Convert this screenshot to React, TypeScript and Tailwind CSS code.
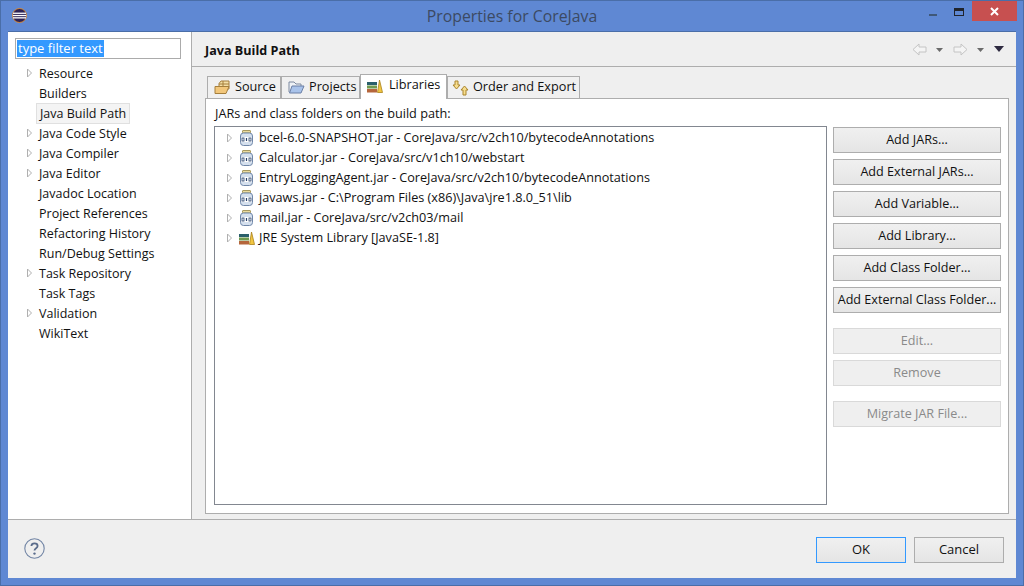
import React from "react";

const font = { fontFamily: '"Open Sans", "Noto Sans", sans-serif' };

function Arrow() {
  return (
    <svg width="7" height="10" viewBox="0 0 7 10" className="shrink-0">
      <path d="M1.5 1 L5.5 5 L1.5 9 Z" fill="#fff" stroke="#b0b0b0" />
    </svg>
  );
}

function EclipseLogo() {
  return (
    <svg width="15" height="15" viewBox="0 0 15 15">
      <circle cx="7.5" cy="7.5" r="7" fill="#2c2255" stroke="#f7941e" strokeWidth="0.8" />
      <rect x="1" y="4.6" width="13" height="1.3" fill="#fff" />
      <rect x="0.7" y="6.9" width="13.6" height="1.3" fill="#fff" />
      <rect x="1" y="9.2" width="13" height="1.3" fill="#fff" />
    </svg>
  );
}

function Jar() {
  return (
    <svg width="13" height="16" viewBox="0 0 13 16" className="shrink-0">
      <rect x="2.5" y="0.5" width="8" height="2.5" rx="0.5" fill="#ecdca0" stroke="#a89a60" />
      <rect x="0.5" y="3" width="12" height="12.5" rx="3" fill="#d5e0ee" stroke="#6f86a8" />
      <rect x="1" y="7" width="11" height="5" fill="#fff" />
      <rect x="2" y="8" width="2" height="3" fill="none" stroke="#27406b" strokeWidth="0.8" />
      <path d="M6.5 8v3" stroke="#27406b" strokeWidth="1.2" />
      <rect x="9" y="8" width="2" height="3" fill="none" stroke="#27406b" strokeWidth="0.8" />
    </svg>
  );
}

function Library() {
  return (
    <svg width="16" height="14" viewBox="0 0 16 14" className="shrink-0">
      <rect x="0" y="3" width="10" height="3" fill="#2a5f6b" />
      <rect x="0" y="6.5" width="10" height="3" fill="#6f9a4f" />
      <rect x="0" y="10" width="10" height="3.5" fill="#b5663c" />
      <path d="M10.5 13.5 L12.5 1 L15.5 13.5 Z" fill="#f2c641" stroke="#a9821c" strokeWidth="0.8" />
    </svg>
  );
}

function PackageFolder() {
  return (
    <svg width="17" height="15" viewBox="0 0 17 15" className="shrink-0">
      <path d="M5 3.5 L7 1 H15 V9 H5 Z" fill="#f3dfa6" stroke="#a57f3c" />
      <path d="M9 1v5M5 4h10" stroke="#a57f3c" />
      <path d="M1 6.5 H12 L15 6.5 L12 13.5 H1 Z" fill="#f2c77b" stroke="#a57f3c" />
    </svg>
  );
}

function BlueFolder() {
  return (
    <svg width="17" height="15" viewBox="0 0 17 15" className="shrink-0">
      <path d="M1 12 V2 H6 L8 4 H13 V6" fill="#eef1f5" stroke="#7d8aa0" />
      <path d="M1.5 13 L4 6 H16 L13 13 Z" fill="#a9c3ea" stroke="#6a7fa5" />
    </svg>
  );
}

function OrderIcon() {
  return (
    <svg width="17" height="16" viewBox="0 0 17 16" className="shrink-0">
      <path d="M3 1 H6 V5 H8 L4.5 9 L1 5 H3 Z" fill="#f6dd8e" stroke="#a9842c" />
      <path d="M11 15 H14 V10 H16 L12.5 6 L9 10 H11 Z" fill="#f6dd8e" stroke="#a9842c" />
    </svg>
  );
}

function NavArrow({ flip }: { flip?: boolean }) {
  return (
    <svg width="15" height="13" viewBox="0 0 15 13" className={flip ? "" : "-scale-x-100"}>
      <path d="M1 4 H8 V1 L14 6.5 L8 12 V9 H1 Z" fill="#f4f4f4" stroke="#c4c4c4" />
    </svg>
  );
}

function Drop({ dark }: { dark?: boolean }) {
  return (
    <svg width={dark ? 10 : 7} height={dark ? 6 : 4} viewBox={dark ? "0 0 10 6" : "0 0 7 4"}>
      {dark ? <path d="M0 0 H10 L5 6 Z" fill="#2e2a40" /> : <path d="M0 0 H7 L3.5 4 Z" fill="#6b6b6b" />}
    </svg>
  );
}

function Help() {
  return (
    <svg width="21" height="21" viewBox="0 0 21 21">
      <circle cx="10.5" cy="10.5" r="9.7" fill="none" stroke="#7285a5" strokeWidth="1.1" />
      <path d="M7.4 8 C7.6 4.6 13.6 4.6 13.6 8 C13.6 10.3 10.5 10.2 10.5 12.6" fill="none" stroke="#5a6c8c" strokeWidth="1.8" />
      <circle cx="10.5" cy="15.6" r="1.2" fill="#5a6c8c" />
    </svg>
  );
}

const navItems: [string, boolean, boolean?][] = [
  ["Resource", true],
  ["Builders", false],
  ["Java Build Path", false, true],
  ["Java Code Style", true],
  ["Java Compiler", true],
  ["Java Editor", true],
  ["Javadoc Location", false],
  ["Project References", false],
  ["Refactoring History", false],
  ["Run/Debug Settings", false],
  ["Task Repository", true],
  ["Task Tags", false],
  ["Validation", true],
  ["WikiText", false],
];

const jars = [
  "bcel-6.0-SNAPSHOT.jar - CoreJava/src/v2ch10/bytecodeAnnotations",
  "Calculator.jar - CoreJava/src/v1ch10/webstart",
  "EntryLoggingAgent.jar - CoreJava/src/v2ch10/bytecodeAnnotations",
  "javaws.jar - C:\\Program Files (x86)\\Java\\jre1.8.0_51\\lib",
  "mail.jar - CoreJava/src/v2ch03/mail",
];

function Btn({ label, disabled, mt }: { label: string; disabled?: boolean; mt?: string }) {
  return (
    <button
      className={
        "h-[26px] w-[168px] shrink-0 border text-[12.6px] leading-none " +
        (mt ?? "") +
        (disabled
          ? " border-[#d9d9d9] bg-[#efefef] text-[#8a8a8a]"
          : " border-[#adadad] bg-gradient-to-b from-[#f0f0f0] to-[#e5e5e5] text-[#111]")
      }
    >
      {label}
    </button>
  );
}

function Tab({ label, icon, active, w, left, gap }: { label: string; icon: React.ReactNode; active?: boolean; w: string; left: string; gap: string }) {
  return (
    <div
      className={
        "flex shrink-0 items-center border border-b-0 border-[#adadad] " +
        gap +
        " " +
        left +
        " " +
        w +
        (active ? " relative z-10 -mb-px h-[25px] bg-white pb-[3px]" : " h-[22px] bg-[#f0f0f0]")
      }
    >
      {icon}
      <span className="pb-[2px] text-[12.7px] whitespace-nowrap text-[#111]">{label}</span>
    </div>
  );
}

export default function App() {
  return (
    <div style={font} className="flex h-[586px] w-[1024px] flex-col overflow-hidden border border-[#4a6ea8] bg-[#5f88d3] text-[12.5px] text-[#111]">
      <div className="grid h-[30px] shrink-0 grid-cols-[1fr_auto_1fr] items-start">
        <div className="flex h-full items-center pb-[2px] pl-[11px]">
          <EclipseLogo />
        </div>
        <div className="pt-[4px] text-[15.8px] leading-[22px] text-[#3c4a63]">Properties for CoreJava</div>
        <div className="flex items-start justify-end pr-[6px]">
          <div className="mt-[13px] mr-[17px] h-[2px] w-[8px] bg-[#3f5878]" />
          <div className="mt-[7px] mr-[8px] h-[8px] w-[10px] border border-t-[3px] border-[#20242c]" />
          <div className="flex h-[20px] w-[45px] items-center justify-center bg-[#c75050]">
            <svg width="9" height="9" viewBox="0 0 9 9">
              <path d="M1 1 L8 8 M8 1 L1 8" stroke="#fff" strokeWidth="2" />
            </svg>
          </div>
        </div>
      </div>

      <div className="mx-[7px] flex h-[547px] shrink-0 flex-col border-t border-[#4a6ea8] bg-[#efefef]">
        <div className="flex h-[487px] shrink-0">
          <div className="w-[183px] shrink-0 bg-white pt-[6px] pl-[7px]">
            <div className="flex h-[21px] w-[166px] items-center border border-[#ababab] pl-px">
              <span className="bg-[#3399ff] px-px text-[13px] leading-[17px] text-white">type filter text</span>
            </div>
            <div className="mt-[4px]">
              {navItems.map(([name, arrow, sel]) => (
                <div key={name} className="flex h-[20px] items-center">
                  <div className="flex w-[20px] justify-end pr-[2px]">{arrow && <Arrow />}</div>
                  <span
                    className={
                      "ml-[1px] px-[3px] leading-[19px] whitespace-nowrap " +
                      (sel ? "border border-[#e0e0e0] bg-[#f4f4f4] px-[2px]" : "")
                    }
                  >
                    {name}
                  </span>
                </div>
              ))}
            </div>
          </div>

          <div className="flex min-w-0 flex-1 flex-col border-l border-[#adadad]">
            <div className="flex h-[35px] shrink-0 items-center border-b border-[#adadad] pt-[1px] pr-[12px] pl-[13px]">
              <span className="flex-1 pt-[4px] text-[12.6px] font-bold text-[#111]">Java Build Path</span>
              <NavArrow />
              <div className="ml-[9px]"><Drop /></div>
              <div className="ml-[10px]"><NavArrow flip /></div>
              <div className="ml-[9px]"><Drop /></div>
              <div className="mb-px ml-[10px]"><Drop dark /></div>
            </div>

            <div className="flex flex-1 flex-col pt-[7px] pr-[7px] pl-[13px]">
              <div className="flex h-[24px] shrink-0 items-end pl-[2px]">
                <Tab label="Source" w="w-[74px]" left="pl-[6px]" gap="gap-[4px]" icon={<PackageFolder />} />
                <Tab label="Projects" w="w-[79px]" left="pl-[6px]" gap="gap-[4px]" icon={<BlueFolder />} />
                <Tab label="Libraries" w="w-[87px]" left="pl-[6px]" gap="gap-[6px]" active icon={<Library />} />
                <Tab label="Order and Export" w="w-[133px]" left="pl-[4px]" gap="gap-[4px]" icon={<OrderIcon />} />
              </div>
              <div className="flex h-[416px] shrink-0 flex-col border border-[#adadad] bg-white pt-[5px] pr-[7px] pl-[8px]">
                <div className="h-[22px] pl-px text-[12.7px] leading-[18px]">JARs and class folders on the build path:</div>
                <div className="flex gap-[6px]">
                  <div className="h-[379px] w-[613px] shrink-0 border border-[#828790] bg-white text-[12.66px]">
                    {jars.map((j) => (
                      <div key={j} className="flex h-[20px] items-center pl-[11px]">
                        <div className="flex pt-[2px]"><Arrow /></div>
                        <div className="ml-[7px] flex w-[19px] pt-[2px]"><Jar /></div>
                        <span className="whitespace-nowrap">{j}</span>
                      </div>
                    ))}
                    <div className="flex h-[20px] items-center pl-[11px]">
                      <div className="flex pt-[2px]"><Arrow /></div>
                      <div className="ml-[6px] flex w-[20px] pt-[2px]"><Library /></div>
                      <span className="whitespace-nowrap">JRE System Library [JavaSE-1.8]</span>
                    </div>
                  </div>
                  <div className="flex flex-col gap-[6px] pt-[1px]">
                    <Btn label="Add JARs..." />
                    <Btn label="Add External JARs..." />
                    <Btn label="Add Variable..." />
                    <Btn label="Add Library..." />
                    <Btn label="Add Class Folder..." />
                    <Btn label="Add External Class Folder..." />
                    <Btn label="Edit..." disabled mt="mt-[9px]" />
                    <Btn label="Remove" disabled />
                    <Btn label="Migrate JAR File..." disabled mt="mt-[9px]" />
                  </div>
                </div>
              </div>
            </div>
          </div>
        </div>

        <div className="flex h-[59px] shrink-0 items-start border-t border-[#adadad] pt-[17px] pr-[12px] pl-[16px]">
          <div className="mt-px flex"><Help /></div>
          <div className="ml-auto flex gap-[8px]">
            <button className="h-[26px] w-[90px] border border-[#3399ff] bg-gradient-to-b from-[#f0f0f0] to-[#e5e5e5] text-[13px]">OK</button>
            <button className="h-[26px] w-[90px] border border-[#adadad] bg-gradient-to-b from-[#f0f0f0] to-[#e5e5e5] text-[13px]">Cancel</button>
          </div>
        </div>
      </div>
    </div>
  );
}
